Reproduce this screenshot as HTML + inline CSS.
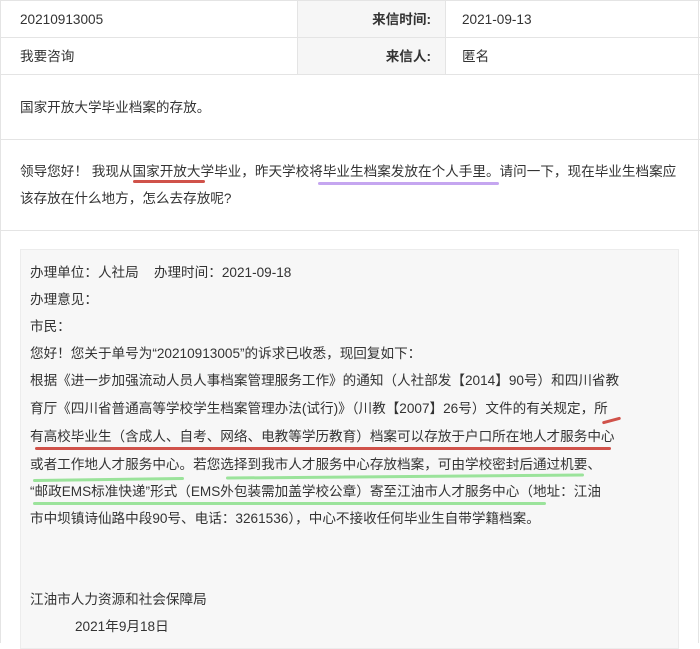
<!DOCTYPE html>
<html><head><meta charset="utf-8"><style>
*{margin:0;padding:0;box-sizing:border-box}
body{width:700px;height:643px;overflow:hidden;background:#fff;font-family:"Liberation Sans","Noto Sans CJK SC",sans-serif;font-size:13.6px;color:#333;position:relative}
.b{position:absolute;background:#e4e4e4}
.t{position:absolute;white-space:nowrap;line-height:16px}
.lbl{font-weight:bold;text-align:right}
.box{position:absolute;left:20px;top:249px;width:659px;height:400px;background:#f7f7f7;border:1px solid #ececec}
.r{position:absolute;left:30px;white-space:nowrap;line-height:16px}
.u{position:absolute;height:3px;border-radius:2px}
</style></head><body>
<div style="position:absolute;left:298px;top:0;width:147px;height:74px;background:#f6f6f6"></div>
<div class="b" style="left:0;top:0;width:1px;height:643px"></div>
<div class="b" style="left:698px;top:0;width:1px;height:643px"></div>
<div class="b" style="left:0;top:0;width:700px;height:1px"></div>
<div class="b" style="left:0;top:37px;width:700px;height:1px"></div>
<div class="b" style="left:0;top:74px;width:700px;height:1px"></div>
<div class="b" style="left:0;top:139px;width:700px;height:1px"></div>
<div class="b" style="left:0;top:230px;width:700px;height:1px"></div>
<div class="b" style="left:297px;top:0;width:1px;height:74px"></div>
<div class="b" style="left:445px;top:0;width:1px;height:74px"></div>

<div class="t" style="left:20px;top:12px">20210913005</div>
<div class="t lbl" style="left:300px;width:131px;top:12px">来信时间:</div>
<div class="t" style="left:462px;top:12px">2021-09-13</div>
<div class="t" style="left:20px;top:49px">我要咨询</div>
<div class="t lbl" style="left:300px;width:131px;top:49px">来信人:</div>
<div class="t" style="left:462px;top:49px">匿名</div>
<div class="t" style="left:20px;top:100px">国家开放大学毕业档案的存放。</div>
<div class="t" style="left:20px;top:164px">领导您好！ 我现从国家开放大学毕业，昨天学校将毕业生档案发放在个人手里。请问一下，现在毕业生档案应</div>
<div class="t" style="left:20px;top:191px">该存放在什么地方，怎么去存放呢?</div>
<div class="u" style="left:133px;top:180px;width:72px;background:#d0524a"></div>
<div class="u" style="left:318px;top:182px;width:181px;background:#c5a6f0"></div>

<div class="box"></div>
<div class="r" style="top:265px">办理单位：人社局&nbsp;&nbsp;&nbsp;&nbsp;办理时间：2021-09-18</div>
<div class="r" style="top:292px">办理意见：</div>
<div class="r" style="top:319px">市民：</div>
<div class="r" style="top:346px">您好！您关于单号为“20210913005”的诉求已收悉，现回复如下：</div>
<div class="r" style="top:373px">根据《进一步加强流动人员人事档案管理服务工作》的通知（人社部发【2014】90号）和四川省教</div>
<div class="r" style="top:401px">育厅《四川省普通高等学校学生档案管理办法(试行)》（川教【2007】26号）文件的有关规定，所</div>
<div class="r" style="top:429px">有高校毕业生（含成人、自考、网络、电教等学历教育）档案可以存放于户口所在地人才服务中心</div>
<div class="r" style="top:457px">或者工作地人才服务中心。若您选择到我市人才服务中心存放档案，可由学校密封后通过机要、</div>
<div class="r" style="top:484px">“邮政EMS标准快递”形式（EMS外包装需加盖学校公章）寄至江油市人才服务中心（地址：江油</div>
<div class="r" style="top:511px">市中坝镇诗仙路中段90号、电话：3261536），中心不接收任何毕业生自带学籍档案。</div>
<div class="r" style="top:592px">江油市人力资源和社会保障局</div>
<div class="r" style="top:619px;left:75px">2021年9月18日</div>

<div class="u" style="left:602px;top:419px;width:19px;background:#d0524a;transform:rotate(-15deg)"></div>
<div class="u" style="left:35px;top:447px;width:576px;background:#d0524a"></div>
<div class="u" style="left:33px;top:478px;width:151px;background:#9be39b;transform:rotate(-0.8deg)"></div>
<div class="u" style="left:226px;top:475px;width:358px;background:#9be39b;transform:rotate(-0.5deg)"></div>
<div class="u" style="left:33px;top:502px;width:513px;background:#9be39b"></div>
</body></html>
